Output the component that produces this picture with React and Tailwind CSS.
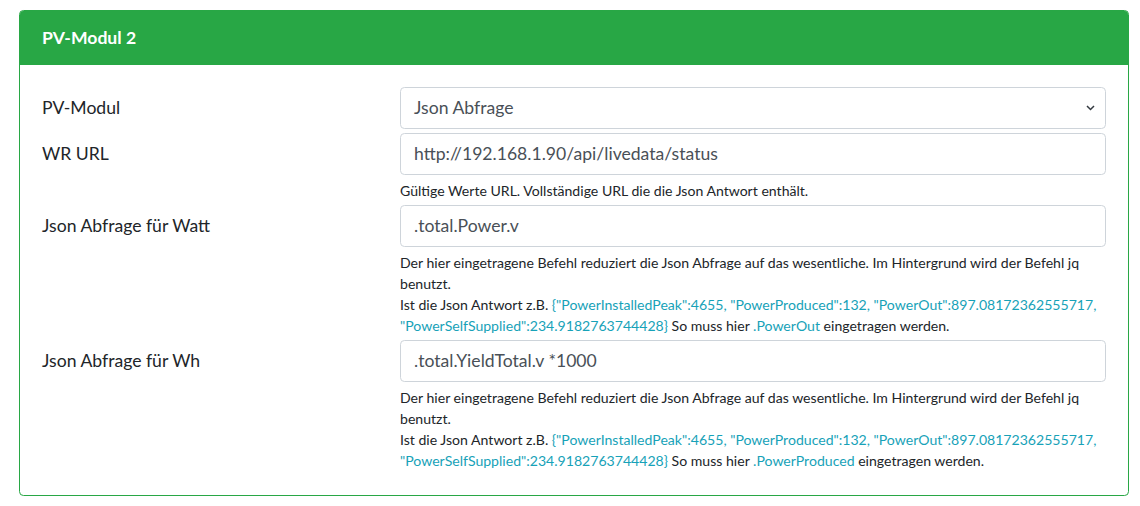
const font = { fontFamily: "Lato, 'Liberation Sans', sans-serif" };

function Label({ children }) {
  return (
    <div className="h-[42px] flex items-center text-[17.6px] text-[#212529]">
      {children}
    </div>
  );
}

function TextInput({ value }) {
  return (
    <div className="h-[42px] flex items-center px-[13px] border border-[#ced4da] rounded-[4.4px] bg-white text-[17.6px] text-[#495057]">
      {value}
    </div>
  );
}

function Select({ value }) {
  return (
    <div className="h-[42px] flex items-center justify-between pl-[13px] pr-[10px] border border-[#ced4da] rounded-[4.4px] bg-white text-[17.6px] text-[#495057]">
      <span>{value}</span>
      <svg width="9" height="6" viewBox="0 0 9 6" fill="none">
        <path d="M1 1l3.5 3.5L8 1" stroke="#343a40" strokeWidth="1.5" />
      </svg>
    </div>
  );
}

function Help({ children }) {
  return <div className="mt-[5px] text-[14.08px] leading-[21px] text-[#212529]">{children}</div>;
}

function JsonHelp({ field }) {
  return (
    <Help>
      Der hier eingetragene Befehl reduziert die Json Abfrage auf das wesentliche. Im Hintergrund wird der Befehl jq benutzt.
      <br />
      Ist die Json Antwort z.B.{" "}
      <span className="text-[#17a2b8]">
        {'{"PowerInstalledPeak":4655, "PowerProduced":132, "PowerOut":897.08172362555717, "PowerSelfSupplied":234.9182763744428}'}
      </span>{" "}
      So muss hier <span className="text-[#17a2b8]">{field}</span> eingetragen werden.
    </Help>
  );
}

function Row({ label, children }) {
  return (
    <div className="flex mb-[4px]">
      <div className="w-[358px] shrink-0">
        <Label>{label}</Label>
      </div>
      <div className="flex-1 min-w-0">{children}</div>
    </div>
  );
}

export default function App() {
  return (
    <div className="bg-white min-h-[506px] pt-[10px] pl-[19px]" style={font}>
      <div className="w-[1110px] border border-[#28a745] rounded-[4.4px] overflow-hidden">
        <div className="h-[54px] flex items-center px-[22px] bg-[#28a745] text-white font-bold text-[17.6px]">
          PV-Modul 2
        </div>
        <div className="px-[22px] pt-[22px] pb-[20px]">
          <Row label="PV-Modul">
            <Select value="Json Abfrage" />
          </Row>
          <Row label="WR URL">
            <TextInput value="http://192.168.1.90/api/livedata/status" />
            <Help>Gültige Werte URL. Vollständige URL die die Json Antwort enthält.</Help>
          </Row>
          <Row label="Json Abfrage für Watt">
            <TextInput value=".total.Power.v" />
            <JsonHelp field=".PowerOut" />
          </Row>
          <Row label="Json Abfrage für Wh">
            <TextInput value=".total.YieldTotal.v *1000" />
            <JsonHelp field=".PowerProduced" />
          </Row>
        </div>
      </div>
    </div>
  );
}
